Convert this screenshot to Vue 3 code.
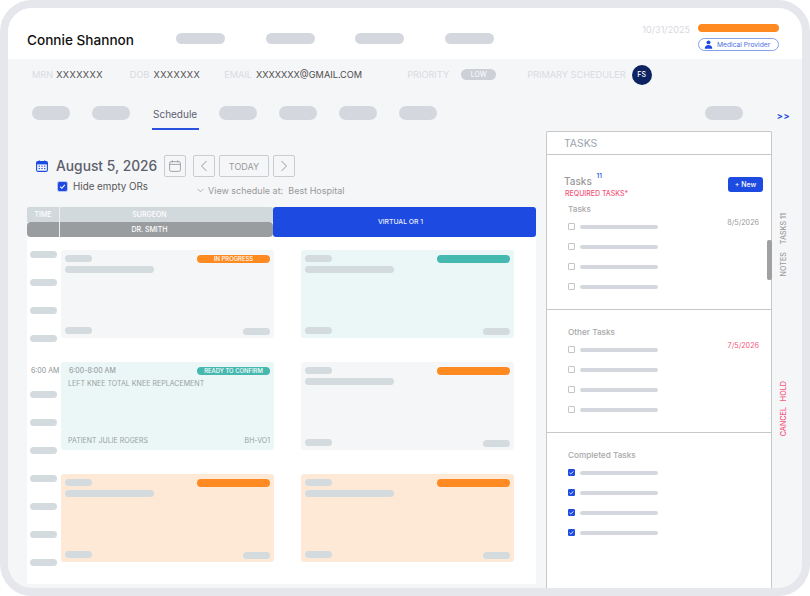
<script setup>
const tabsBefore = 2
const tabsAfter = 4

// left column is OR rows, each row has two case cards
const rows = [
  { label: '', cards: [{ tone: 'gray', status: 'orange', text: 'IN PROGRESS' }, { tone: 'teal', status: 'green' }] },
  { label: '6:00 AM', cards: [{ tone: 'teal', status: 'green', text: 'READY TO CONFIRM', real: true }, { tone: 'gray', status: 'orange' }] },
  { label: '', cards: [{ tone: 'peach', status: 'orange' }, { tone: 'peach', status: 'orange' }] }
]

const sections = [
  { title: 'Tasks', date: '8/5/2026', done: false },
  { title: 'Other Tasks', date: '7/5/2026', done: false, late: true },
  { title: 'Completed Tasks', done: true }
]
</script>

<template>
  <div class="frame">
    <header class="header">
      <h1 class="name">Connie Shannon</h1>
      <div class="header-pills">
        <span v-for="i in 4" :key="i" class="pill head-pill"></span>
      </div>
      <div class="header-right">
        <span class="top-date">10/31/2025</span>
        <div class="provider">
          <span class="orange-bar"></span>
          <span class="role">
            <svg viewBox="0 0 12 12" class="role-icon">
              <circle cx="6" cy="3.2" r="2.6" fill="#1d4ae0" />
              <path d="M1 11.5c0-3 2-4.8 5-4.8s5 1.8 5 4.8z" fill="#1d4ae0" />
            </svg>
            Medical Provider
          </span>
        </div>
      </div>
    </header>

    <div class="meta">
      <span class="meta-label">MRN</span>
      <span class="meta-value mrn">XXXXXXX</span>
      <span class="meta-label">DOB</span>
      <span class="meta-value dob">XXXXXXX</span>
      <span class="meta-label">EMAIL</span>
      <span class="meta-value email">XXXXXXX@GMAIL.COM</span>
      <span class="meta-label">PRIORITY</span>
      <span class="low">LOW</span>
      <span class="meta-label">PRIMARY SCHEDULER</span>
      <span class="avatar">FS</span>
    </div>

    <nav class="tabs">
      <span v-for="i in tabsBefore" :key="'b' + i" class="pill tab-pill"></span>
      <span class="tab-active">Schedule</span>
      <span v-for="i in tabsAfter" :key="'a' + i" class="pill tab-pill"></span>
      <span class="pill tab-pill tab-end"></span>
      <span class="more">&gt;&gt;</span>
    </nav>

    <main class="main">
      <section class="schedule">
        <div class="date-row">
          <svg viewBox="0 0 12 12" class="date-icon">
            <rect x="0.6" y="1.6" width="10.8" height="9.8" rx="1.5" fill="none" stroke="#1d4ae0" stroke-width="1.1" />
            <rect x="0.6" y="1.6" width="10.8" height="2.8" fill="#1d4ae0" />
            <path d="M3.3 0.4v2M8.7 0.4v2" stroke="#1d4ae0" stroke-width="1" />
            <path d="M2.6 6.2h1.4M5.3 6.2h1.4M8 6.2h1.4M2.6 8.6h1.4M5.3 8.6h1.4M8 8.6h1.4" stroke="#1d4ae0" stroke-width="1" />
          </svg>
          <span class="date-text">August 5, 2026</span>
          <button class="btn square cal">
            <svg viewBox="0 0 12 12" class="btn-icon">
              <rect x="0.6" y="1.6" width="10.8" height="9.8" rx="1.6" fill="none" stroke="#8d9096" stroke-width="0.8" />
              <path d="M0.6 4.4h10.8M3.3 0.4v2.2M8.7 0.4v2.2" stroke="#8d9096" stroke-width="0.8" fill="none" />
            </svg>
          </button>
          <button class="btn square">
            <svg viewBox="0 0 8 12" class="btn-arrow"><path d="M6.5 1 1.5 6l5 5" fill="none" stroke="#8d9096" stroke-width="0.9" /></svg>
          </button>
          <button class="btn today">TODAY</button>
          <button class="btn square">
            <svg viewBox="0 0 8 12" class="btn-arrow"><path d="M1.5 1l5 5-5 5" fill="none" stroke="#8d9096" stroke-width="0.9" /></svg>
          </button>
        </div>

        <div class="filter-row">
          <span class="hide-box">
            <svg viewBox="0 0 10 10"><path d="M2.4 5.2 4.2 7l3.4-3.8" fill="none" stroke="#fff" stroke-width="1.2" /></svg>
          </span>
          <span class="hide-text">Hide empty ORs</span>
          <span class="view-text">
            <svg viewBox="0 0 8 5" class="view-chevron"><path d="M0.5 0.5 4 4l3.5-3.5" fill="none" stroke="#999" stroke-width="0.8" /></svg>
            <span>View schedule at:&nbsp; Best Hospital</span>
          </span>
        </div>

        <div class="table-head">
          <div class="head-left">
            <div class="head-top">
              <span class="col-time">TIME</span>
              <span class="col-surgeon">SURGEON</span>
            </div>
            <div class="head-bottom">
              <span class="col-time"></span>
              <span class="col-surgeon">DR. SMITH</span>
            </div>
          </div>
          <div class="head-right">VIRTUAL OR 1</div>
        </div>

        <div class="table-body">
          <div v-for="(row, r) in rows" :key="r" class="row">
            <div class="times">
              <span v-if="row.label" class="time-label">{{ row.label }}</span>
              <span v-else class="pill time-pill"></span>
              <span v-for="i in 3" :key="i" class="pill time-pill"></span>
            </div>
            <div v-for="(card, c) in row.cards" :key="c" class="card" :class="card.tone">
              <div class="card-top">
                <span v-if="card.real" class="case-time">6:00-8:00 AM</span>
                <span v-else class="pill card-pill"></span>
                <span class="status" :class="card.status">{{ card.text }}</span>
              </div>
              <div v-if="card.real" class="case-name">LEFT KNEE TOTAL KNEE REPLACEMENT</div>
              <span v-else class="pill card-wide"></span>
              <div class="card-bottom">
                <template v-if="card.real">
                  <span class="case-foot">PATIENT JULIE ROGERS</span>
                  <span class="case-foot">BH-VO1</span>
                </template>
                <template v-else>
                  <span class="pill card-pill"></span>
                  <span class="pill card-pill low-pill"></span>
                </template>
              </div>
            </div>
          </div>
        </div>
      </section>

      <aside class="panel">
        <div class="panel-head">TASKS</div>
        <div class="panel-intro">
          <div>
            <div class="panel-title">Tasks <sup class="count">11</sup></div>
            <div class="required">REQUIRED TASKS*</div>
          </div>
          <button class="new">+ New</button>
        </div>
        <div v-for="(s, i) in sections" :key="s.title" class="task-section" :class="'sec-' + i">
          <div class="task-title">{{ s.title }}</div>
          <div v-for="n in 4" :key="n" class="task-row">
            <span class="check" :class="{ on: s.done }">
              <svg v-if="s.done" viewBox="0 0 8 8"><path d="M1.8 4.4 3.2 5.6 6.2 2.8" fill="none" stroke="#fff" stroke-width="1" /></svg>
            </span>
            <span class="task-bar"></span>
            <span v-if="s.date && n === 1" class="task-date" :class="{ late: s.late }">{{ s.date }}</span>
          </div>
        </div>
        <span class="scroll-thumb"></span>
      </aside>

      <div class="rail">
        <span class="rail-item">TASKS 11</span>
        <span class="rail-item">NOTES</span>
        <span class="rail-item red hold">HOLD</span>
        <span class="rail-item red">CANCEL</span>
      </div>
    </main>
  </div>
</template>

<style>
html, body { margin: 0; background: #fff; }
</style>

<style scoped>
* { box-sizing: border-box; }

.frame {
  width: 810px;
  height: 596px;
  border: 8px solid #e5e7ec;
  border-radius: 32px;
  background: #f5f6f8;
  overflow: hidden;
  display: flex;
  flex-direction: column;
  font-family: Inter, "Liberation Sans", sans-serif;
  color: #555;
}

.pill { display: block; background: #d4d7de; border-radius: 8px; }

/* header */
.header {
  height: 51px;
  flex: none;
  background: #fff;
  display: flex;
  align-items: flex-start;
  padding-left: 19px;
}
.name {
  margin: 24px 0 0;
  width: 149px;
  font-size: 13.6px;
  line-height: 17px;
  font-weight: 500;
  color: #111;
  white-space: nowrap;
}
.header-pills { display: flex; gap: 40.5px; padding-top: 25px; }
.head-pill { width: 49px; height: 11px; }
.header-right { margin-left: auto; margin-right: 23px; display: flex; gap: 8px; padding-top: 16px; }
.top-date { font-size: 9.1px; line-height: 9px; color: #d7d9de; padding-top: 1px; }
.provider { display: flex; flex-direction: column; gap: 6px; width: 81px; }
.orange-bar { height: 8px; border-radius: 4px; background: #ff8a22; }
.role {
  height: 13px;
  border: 1px solid #86a0ee;
  border-radius: 7px;
  display: flex;
  align-items: center;
  gap: 4px;
  padding-left: 5px;
  font-size: 6.7px;
  color: #4a6fe2;
  white-space: nowrap;
}
.role-icon { width: 9px; height: 9px; flex: none; }

/* patient line */
.meta {
  height: 35px;
  flex: none;
  display: flex;
  align-items: center;
  padding: 0 0 4px 24px;
  font-size: 9.2px;
  white-space: nowrap;
}
.meta-label { color: #d8dbe0; }
.meta-value { color: #4d4d4d; margin-left: 3px; }
.mrn { margin-right: 27px; letter-spacing: 0.4px; }
.dob { margin-left: 4px; margin-right: 24px; letter-spacing: 0.4px; }
.email { margin-left: 4px; margin-right: 45px; }
.low {
  width: 35px;
  height: 11px;
  margin: 0 31px 0 12px;
  border-radius: 6px;
  background: #cdd0d6;
  color: #fff;
  font-size: 6.9px;
  line-height: 11px;
  text-align: center;
}
.avatar {
  width: 20px;
  height: 20px;
  margin-left: 6px;
  border-radius: 50%;
  background: #0d2260;
  color: #fff;
  font-size: 7px;
  font-weight: 500;
  line-height: 20px;
  text-align: center;
}

/* tabs */
.tabs {
  height: 37px;
  flex: none;
  display: flex;
  align-items: flex-start;
  gap: 22px;
  padding: 12px 12px 0 24px;
}
.tab-pill { width: 38px; height: 14px; flex: none; }
.tab-active {
  width: 47px;
  height: 24px;
  margin-right: -2px;
  padding: 2px 0 0 1px;
  border-bottom: 2px solid #2a50e0;
  font-size: 10px;
  line-height: 12px;
  color: #5c6270;
}
.tab-end { margin-left: auto; margin-right: 12px; }
.more { font-size: 9px; font-weight: 700; line-height: 9px; margin-top: 5px; color: #1d4ae0; letter-spacing: 0.5px; }

/* schedule column */
.main { flex: 1; min-height: 0; display: flex; }
.schedule { width: 509px; margin-left: 19px; margin-right: 10px; padding-top: 24px; display: flex; flex-direction: column; flex: none; }

.date-row { display: flex; align-items: center; height: 22px; flex: none; padding-left: 9px; }
.date-icon { width: 12px; height: 12px; margin-right: 8px; }
.date-text { width: 108px; font-size: 13.8px; font-weight: 500; color: #5b606b; white-space: nowrap; }
.btn {
  height: 22px;
  padding: 0;
  margin-right: 4px;
  background: transparent;
  border: 1px solid #c8cbd0;
  border-radius: 2px;
  display: flex;
  align-items: center;
  justify-content: center;
  font-family: inherit;
}
.square { width: 22px; }
.cal { margin-right: 7px; }
.today { width: 50px; font-size: 9px; color: #999; }
.btn-icon { width: 12px; height: 12px; }
.btn-arrow { width: 8px; height: 12px; }

.filter-row { height: 30px; flex: none; display: flex; padding: 5px 0 0 31px; }
.hide-box { width: 9px; height: 9px; margin-right: 6px; background: #1d4ae0; border-radius: 1px; outline: 1px solid #b9c6f3; flex: none; }
.hide-box svg { display: block; width: 9px; height: 9px; }
.hide-text { width: 124px; font-size: 9.8px; line-height: 9px; color: #555; white-space: nowrap; }
.view-text { display: flex; align-items: center; gap: 4px; height: 9px; margin-top: 4px; font-size: 9px; color: #999; white-space: pre; }
.view-chevron { width: 7px; height: 5px; }

.table-head { height: 30px; display: flex; flex: none; }
.head-left { width: 246px; color: #fff; font-size: 7px; font-weight: 500; }
.head-top, .head-bottom { height: 15px; display: flex; line-height: 15px; text-align: center; }
.head-top { background: #d2d9dc; border-radius: 2px 2px 0 0; }
.head-bottom { background: #9a9d9f; border-radius: 4px; }
.col-time { width: 33px; border-right: 1px solid #eef0f2; }
.col-surgeon { flex: 1; padding-right: 34px; }
.head-right {
  flex: 1;
  background: #1d4ae0;
  border-radius: 3px;
  color: #e8edfc;
  font-size: 6.8px;
  font-weight: 500;
  line-height: 30px;
  text-align: center;
  padding-right: 8px;
}

.table-body { flex: 1; min-height: 0; background: #fff; margin-bottom: 4px; padding-top: 13px; }
.row { display: flex; margin-bottom: 24px; }
.row:last-child { margin-bottom: 0; }
.times { width: 34px; height: 88px; flex: none; padding: 1px 0 0 3px; display: flex; flex-direction: column; gap: 21px; }
.time-pill { width: 27px; height: 7px; flex: none; background: #d4dbdf; }
.time-label { height: 7px; flex: none; margin: 4px 0 -4px 1px; font-size: 7px; line-height: 7px; color: #8d9296; white-space: nowrap; }

.card {
  width: 213px;
  height: 88px;
  flex: none;
  padding: 5px 4px 4px;
  border-radius: 3px;
  display: flex;
  flex-direction: column;
}
.card + .card { margin-left: 27px; }
.card.gray { background: #f5f6f8; }
.card.teal { background: #eaf7f6; }
.card.peach { background: #fee8d6; }
.card-top { display: flex; justify-content: space-between; height: 8px; }
.card-pill { width: 27px; height: 7px; background: #d4dbdf; }
.card-wide { width: 89px; height: 7px; margin-top: 3px; background: #d4dbdf; border-radius: 8px; }
.card-bottom { margin-top: auto; display: flex; justify-content: space-between; align-items: flex-end; }
.low-pill { transform: translateY(1px); }
.status {
  width: 73px;
  height: 8px;
  border-radius: 4px;
  color: #fff;
  font-size: 5.9px;
  font-weight: 500;
  line-height: 8px;
  text-align: center;
  white-space: nowrap;
}
.status.orange { background: #ff8a22; }
.status.green { background: #45b8b0; }
.case-time { padding-left: 4px; font-size: 7px; line-height: 8px; color: #8d9296; white-space: nowrap; }
.case-name { margin: 5px 0 0 3px; font-size: 7.07px; line-height: 8px; color: #9a9fa3; white-space: nowrap; }
.case-foot { padding: 0 0 1px; margin-left: 3px; font-size: 7px; line-height: 8px; color: #9a9fa3; white-space: nowrap; }

/* tasks panel */
.panel {
  width: 226px;
  flex: none;
  position: relative;
  background: #fff;
  border: 1px solid #c8c8c8;
  border-bottom: 0;
  border-radius: 2px 2px 0 0;
}
.panel-head { height: 23px; padding-left: 17px; border-bottom: 1px solid #c8c8c8; font-size: 10.4px; line-height: 23px; color: #9aa3ad; }
.panel-intro { height: 48px; padding: 20px 8px 0 17px; display: flex; justify-content: space-between; align-items: flex-start; }
.panel-title { font-size: 10px; line-height: 13px; font-weight: 500; color: #999; }
.count { font-size: 6.5px; line-height: 0; color: #1d4ae0; vertical-align: 7px; margin-left: 2px; }
.required { margin: 1px 0 0 1px; font-size: 7px; line-height: 9px; font-weight: 500; color: #f5557a; white-space: nowrap; }
.new {
  width: 35px;
  height: 15px;
  margin-top: 2px;
  padding: 0;
  border: 0;
  border-radius: 3px;
  background: #1d4ae0;
  color: #fff;
  font-family: inherit;
  font-size: 6.9px;
  font-weight: 500;
}

.task-section { padding-left: 21px; border-bottom: 1px solid #c8c8c8; }
.sec-0 { height: 107px; padding-top: 1px; }
.sec-1 { height: 123px; padding-top: 17px; }
.sec-2 { padding-top: 17px; border-bottom: 0; }
.task-title { height: 13px; font-size: 8.2px; line-height: 11px; font-weight: 500; color: #a8a8a8; white-space: nowrap; }
.task-row { height: 20px; display: flex; align-items: center; }
.check { width: 7px; height: 7px; flex: none; margin-top: -1px; border: 1px solid #c5c5c5; border-radius: 1px; }
.check.on { background: #1d4ae0; border-color: #1d4ae0; }
.check svg { display: block; width: 7px; height: 7px; margin: -1px; }
.task-bar { width: 78px; height: 4px; margin-left: 5px; border-radius: 2px; background: #d4d7de; }
.task-date { margin: -9px 0 0 auto; padding-right: 12px; font-size: 7.2px; color: #9a9a9a; }
.task-date.late { color: #f5557a; }
.scroll-thumb { position: absolute; right: -1px; top: 108px; width: 5px; height: 40px; border-radius: 2px; background: #a0a0a0; }

/* side rail */
.rail { flex: 1; padding: 82px 0 0 7px; display: flex; flex-direction: column; align-items: flex-start; gap: 8px; }
.rail-item {
  writing-mode: vertical-rl;
  transform: rotate(180deg);
  font-size: 7.2px;
  font-weight: 500;
  line-height: 9px;
  color: #9a9a9a;
  white-space: nowrap;
}
.rail-item.red { color: #f5557a; }
.hold { margin-top: 96px; margin-bottom: -2px; }
</style>
